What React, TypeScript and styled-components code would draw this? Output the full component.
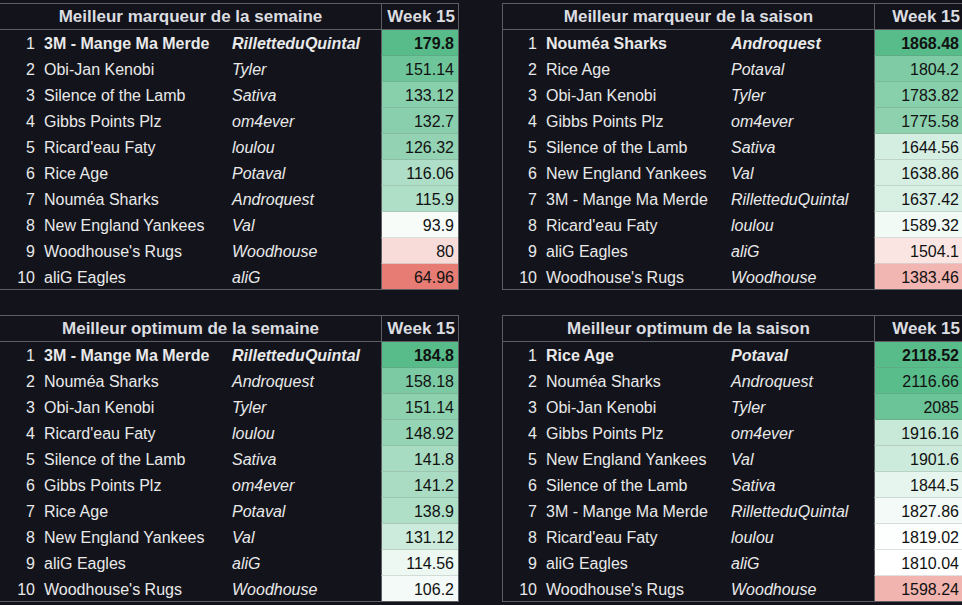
import styled, { createGlobalStyle } from "styled-components";

type Row = { name: string; player: string; score: number; heat: number };
type Board = { title: string; cols: number[]; open?: boolean; rows: Row[] };

const GlobalStyle = createGlobalStyle`
  html, body {
    margin: 0;
    padding: 0;
    background: #13141b;
    overflow: hidden;
  }
  body {
    font-family: "Liberation Sans", Arial, sans-serif;
    font-size: 16px;
  }
`;

const GREEN = [87, 187, 138];
const RED = [230, 124, 115];

// colour scale like the sheet: -1 red, 0 white, 1 green
const heatColor = (t: number) => {
  const target = t >= 0 ? GREEN : RED;
  const k = Math.min(1, Math.abs(t));
  const c = target.map((v) => Math.round(255 - k * (255 - v)));
  return `rgb(${c[0]}, ${c[1]}, ${c[2]})`;
};

const r = (name: string, player: string, score: number, heat: number): Row => ({
  name,
  player,
  score,
  heat,
});

const boards: Board[] = [
  {
    title: "Meilleur marqueur de la semaine",
    cols: [38, 191, 152, 77],
    open: true,
    rows: [
      r("3M - Mange Ma Merde", "RilletteduQuintal", 179.8, 1),
      r("Obi-Jan Kenobi", "Tyler", 151.14, 0.86),
      r("Silence of the Lamb", "Sativa", 133.12, 0.71),
      r("Gibbs Points Plz", "om4ever", 132.7, 0.7),
      r("Ricard'eau Faty", "loulou", 126.32, 0.64),
      r("Rice Age", "Potaval", 116.06, 0.48),
      r("Nouméa Sharks", "Androquest", 115.9, 0.47),
      r("New England Yankees", "Val", 93.9, 0.05),
      r("Woodhouse's Rugs", "Woodhouse", 80, -0.27),
      r("aliG Eagles", "aliG", 64.96, -1),
    ],
  },
  {
    title: "Meilleur marqueur de la saison",
    cols: [37, 188, 146, 89],
    rows: [
      r("Nouméa Sharks", "Androquest", 1868.48, 1),
      r("Rice Age", "Potaval", 1804.2, 0.77),
      r("Obi-Jan Kenobi", "Tyler", 1783.82, 0.71),
      r("Gibbs Points Plz", "om4ever", 1775.58, 0.68),
      r("Silence of the Lamb", "Sativa", 1644.56, 0.25),
      r("New England Yankees", "Val", 1638.86, 0.24),
      r("3M - Mange Ma Merde", "RilletteduQuintal", 1637.42, 0.23),
      r("Ricard'eau Faty", "loulou", 1589.32, 0.08),
      r("aliG Eagles", "aliG", 1504.1, -0.2),
      r("Woodhouse's Rugs", "Woodhouse", 1383.46, -0.56),
    ],
  },
  {
    title: "Meilleur optimum de la semaine",
    cols: [38, 191, 152, 77],
    open: true,
    rows: [
      r("3M - Mange Ma Merde", "RilletteduQuintal", 184.8, 1),
      r("Nouméa Sharks", "Androquest", 158.18, 0.78),
      r("Obi-Jan Kenobi", "Tyler", 151.14, 0.68),
      r("Ricard'eau Faty", "loulou", 148.92, 0.63),
      r("Silence of the Lamb", "Sativa", 141.8, 0.52),
      r("Gibbs Points Plz", "om4ever", 141.2, 0.51),
      r("Rice Age", "Potaval", 138.9, 0.47),
      r("New England Yankees", "Val", 131.12, 0.3),
      r("aliG Eagles", "aliG", 114.56, 0.1),
      r("Woodhouse's Rugs", "Woodhouse", 106.2, 0.07),
    ],
  },
  {
    title: "Meilleur optimum de la saison",
    cols: [37, 188, 146, 89],
    rows: [
      r("Rice Age", "Potaval", 2118.52, 1),
      r("Nouméa Sharks", "Androquest", 2116.66, 0.99),
      r("Obi-Jan Kenobi", "Tyler", 2085, 0.88),
      r("Gibbs Points Plz", "om4ever", 1916.16, 0.33),
      r("New England Yankees", "Val", 1901.6, 0.3),
      r("Silence of the Lamb", "Sativa", 1844.5, 0.15),
      r("3M - Mange Ma Merde", "RilletteduQuintal", 1827.86, 0.07),
      r("Ricard'eau Faty", "loulou", 1819.02, 0.01),
      r("aliG Eagles", "aliG", 1810.04, 0),
      r("Woodhouse's Rugs", "Woodhouse", 1598.24, -0.57),
    ],
  },
];

const Page = styled.main`
  display: grid;
  grid-template-columns: 459px 462px;
  column-gap: 43px;
  row-gap: 25px;
  padding-top: 3px;
`;

const Table = styled.section<{ $cols: number[]; $open?: boolean }>`
  display: grid;
  grid-template-columns: ${(p) => p.$cols.map((c) => `${c}px`).join(" ")};
  border: 1px solid #5d5e63;
  border-left: ${(p) => (p.$open ? "none" : "1px solid #5d5e63")};
  color: #e9e9ea;
  align-self: start;
`;

const Title = styled.div`
  grid-column: 1 / span 3;
  height: 25px;
  line-height: 25px;
  text-align: center;
  font-size: 17px;
  font-weight: bold;
  color: #dcdde0;
  border-bottom: 1px solid #5d5e63;
  white-space: nowrap;
`;

const WeekHead = styled.div`
  height: 25px;
  line-height: 25px;
  text-align: right;
  padding-right: 3px;
  font-size: 17px;
  font-weight: bold;
  color: #dcdde0;
  border-left: 1px solid #5d5e63;
  border-bottom: 1px solid #5d5e63;
  white-space: nowrap;
`;

const Cell = styled.div<{ $last?: boolean; $bold?: boolean }>`
  height: 24px;
  padding-top: 1px;
  line-height: 25px;
  border-bottom: ${(p) => (p.$last ? "none" : "1px solid transparent")};
  font-weight: ${(p) => (p.$bold ? "bold" : "normal")};
  white-space: nowrap;
  overflow: hidden;
`;

const Rank = styled(Cell)`
  text-align: right;
  padding-right: 3px;
`;

const Team = styled(Cell)`
  padding-left: 6px;
`;

const Player = styled(Cell)`
  padding-left: 3px;
  font-style: italic;
`;

const Score = styled(Cell)<{ $bg: string }>`
  text-align: right;
  padding-right: 4px;
  color: #111;
  background: ${(p) => p.$bg};
  border-left: 1px solid #5d5e63;
  border-bottom: ${(p) => (p.$last ? "none" : "1px solid rgba(120, 120, 120, 0.22)")};
`;

const Leaderboard = ({ board }: { board: Board }) => (
  <Table $cols={board.cols} $open={board.open}>
    <Title>{board.title}</Title>
    <WeekHead>Week 15</WeekHead>
    {board.rows.map((row, i) => {
      const last = i === board.rows.length - 1;
      const bold = i === 0;
      return [
        <Rank key={`r${i}`} $last={last}>{i + 1}</Rank>,
        <Team key={`t${i}`} $last={last} $bold={bold}>{row.name}</Team>,
        <Player key={`p${i}`} $last={last} $bold={bold}>{row.player}</Player>,
        <Score key={`s${i}`} $last={last} $bold={bold} $bg={heatColor(row.heat)}>
          {row.score}
        </Score>,
      ];
    })}
  </Table>
);

const App = () => (
  <>
    <GlobalStyle />
    <Page>
      {boards.map((b) => (
        <Leaderboard key={b.title} board={b} />
      ))}
    </Page>
  </>
);

export default App;
